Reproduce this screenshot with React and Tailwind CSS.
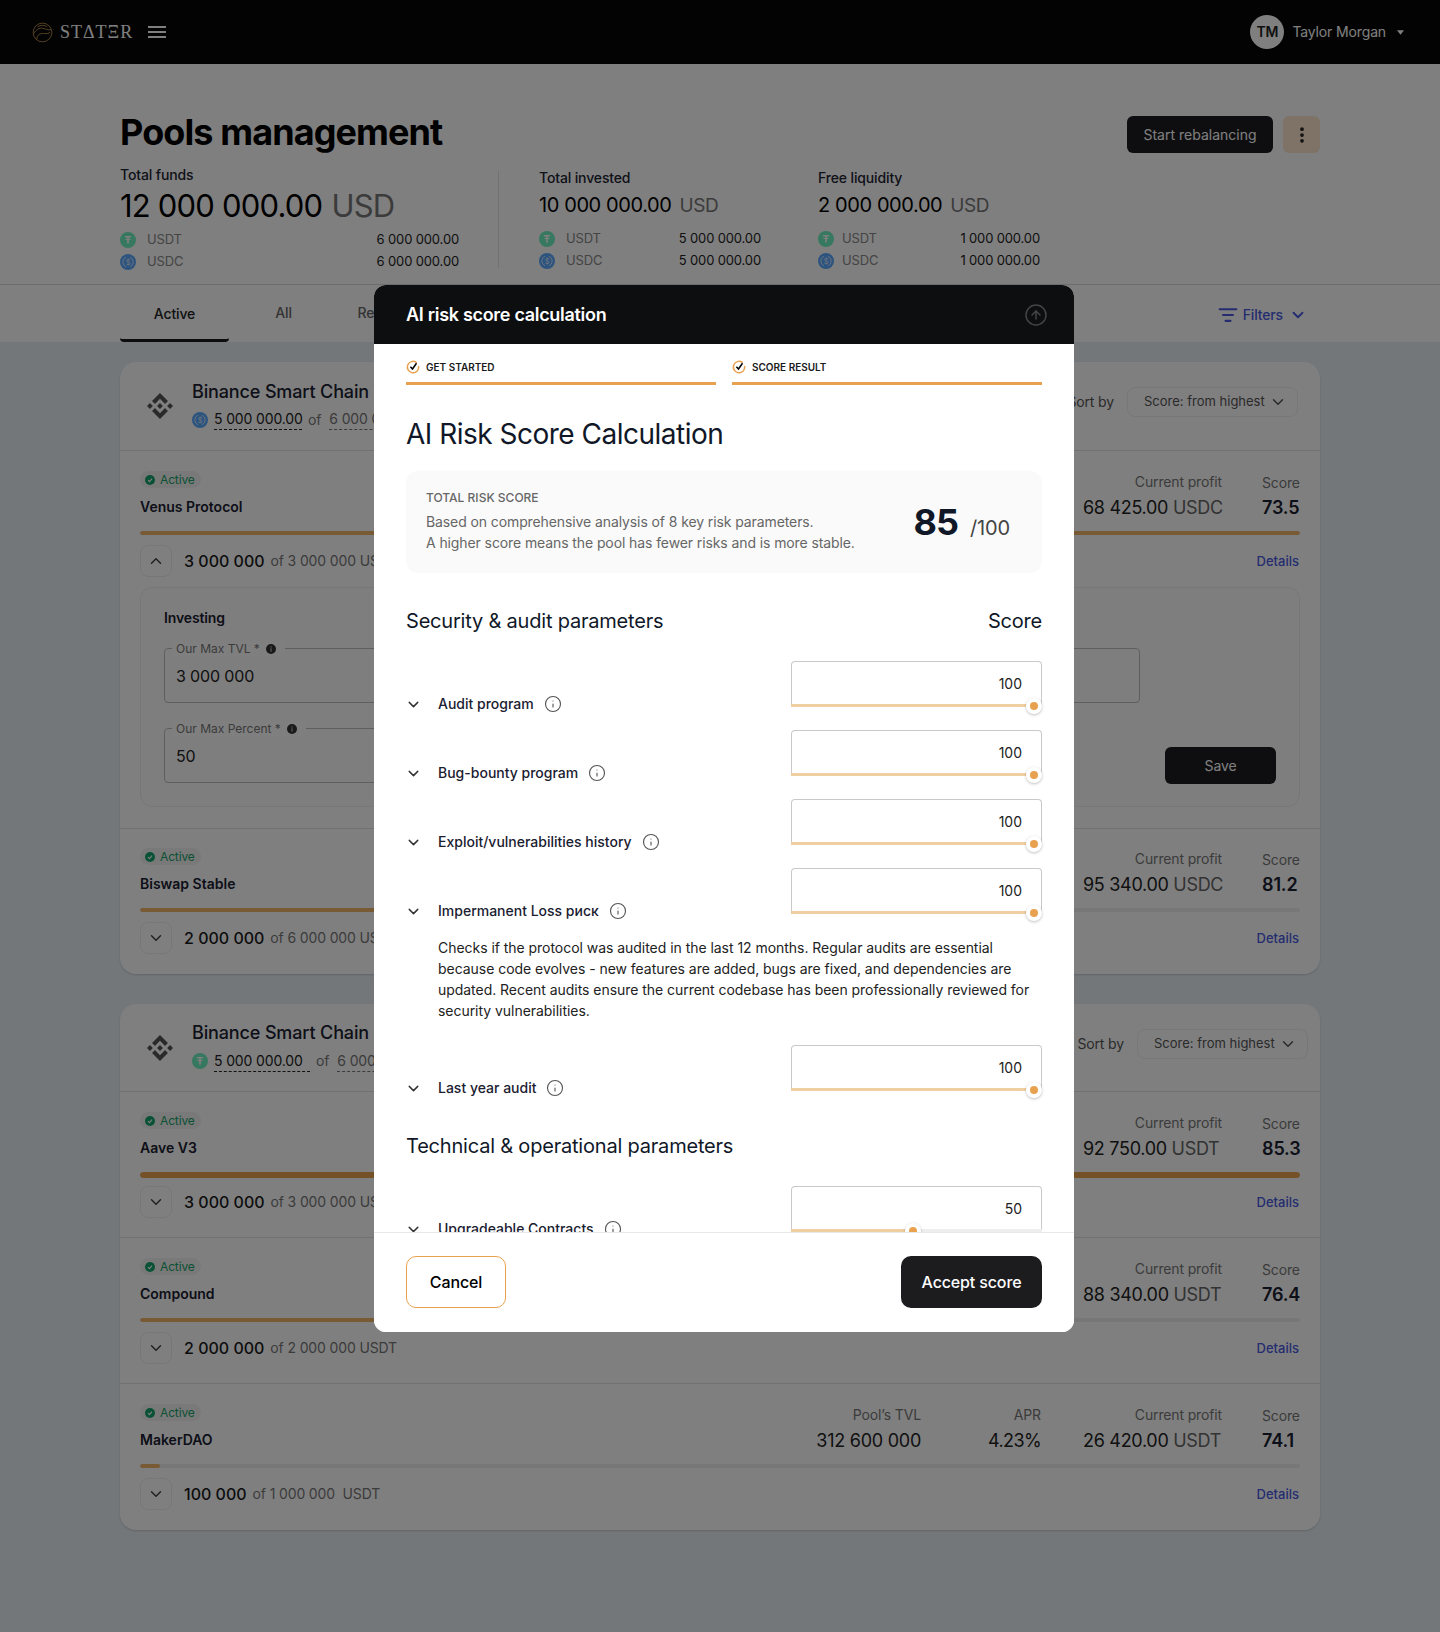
import { ChevronDown, ChevronUp, CircleArrowUp, EllipsisVertical, Info, ListFilter } from 'lucide-react';

const tether = (
  <svg viewBox="0 0 16 16" className="w-4 h-4 shrink-0">
    <circle cx="8" cy="8" r="8" fill="#6ef0c0" />
    <path d="M4.900 4.100h6.200v1.400H8.800v1.400c1.200.1 2.200.4 2.200.7s-1 .6-2.200.7v3.200H7.200V8.300C6 8.200 5 7.900 5 7.600s1-.6 2.200-.7V5.500H4.900z" fill="#fff" />
  </svg>
);

const usdc = (
  <svg viewBox="0 0 16 16" className="w-4 h-4 shrink-0">
    <circle cx="8" cy="8" r="8" fill="#5aa8ff" />
    <path d="M6 3.200a5.200 5.200 0 0 0 0 9.600M10 3.200a5.200 5.200 0 0 1 0 9.600" fill="none" stroke="#dfe9fb" strokeWidth="0.9" />
    <text x="8" y="10.700" textAnchor="middle" fontSize="7.500" fill="#dfe9fb" fontFamily="Inter">$</text>
  </svg>
);

const binance = (
  <svg viewBox="0 0 24 24" className="w-[26px] h-[26px] text-[#555]" fill="currentColor">
    <path d="M16.624 13.9202l2.7175 2.7154-7.353 7.353-7.353-7.352 2.7175-2.7164 4.6355 4.6595 4.6356-4.6595zm4.6366-4.6366L24 12l-2.7154 2.7164L18.5682 12l2.6924-2.7164zm-9.272.001l2.7163 2.6914-2.7164 2.7174v-.001L9.2721 12l2.7164-2.7154zm-9.2722-.001L5.4088 12l-2.6914 2.6924L0 12l2.7164-2.7164zM11.9885.0115l7.353 7.329-2.7174 2.7154-4.6356-4.6356-4.6355 4.6595-2.7174-2.7154 7.353-7.353z" />
  </svg>
);

function StepCheck() {
  return (
    <svg viewBox="0 0 14 14" className="w-3.5 h-3.5 shrink-0 overflow-visible" fill="none">
      <path d="M10.300 2.400A5.700 5.700 0 1 0 12.700 6.500" stroke="#e8a24f" strokeWidth="1.500" strokeLinecap="round" />
      <path d="M4.400 6.700l2.100 2.300 4-5.700" stroke="#000" strokeWidth="1.500" />
    </svg>
  );
}

function ActiveBadge() {
  return (
    <span className="inline-flex items-center gap-[5px] h-[17px] w-[61px] pl-[5px] rounded-full bg-[#f2f2f2] text-xs text-[#16a36a]">
      <svg viewBox="0 0 10 10" className="w-2.5 h-2.5">
        <circle cx="5" cy="5" r="5" fill="#12a56b" />
        <path d="M3 5.100l1.500 1.500L7 3.700" fill="none" stroke="#fff" strokeWidth="1.100" />
      </svg>
      Active
    </span>
  );
}

function Stat({ label, amount, big, usdt, usdc: usdcValue, width, nameGap }) {
  return (
    <div className={width}>
      <div className={`text-sm font-medium text-[#1d2433] ${big ? '' : 'pt-[3px]'}`}>{label}</div>
      <div className={big ? 'text-[31px] leading-[36px] mt-[3px] tracking-[-0.8px] text-black' : 'text-[20px] leading-[28px] mt-[3px] tracking-[-0.4px] text-black'}>
        {amount}
        <span className={`text-[#777] ${big ? 'ml-[9px]' : 'ml-[8px] text-[19px]'}`}>USD</span>
      </div>
      <div className={`text-[13px] text-[#888] ${big ? 'mt-[5px]' : 'mt-[8px]'}`}>
        <div className="flex items-center h-[22px]">
          {tether}
          <span className={nameGap}>USDT</span>
          <span className="ml-auto text-[#222]">{usdt}</span>
        </div>
        <div className="flex items-center h-[22px]">
          {usdc}
          <span className={nameGap}>USDC</span>
          <span className="ml-auto text-[#222]">{usdcValue}</span>
        </div>
      </div>
    </div>
  );
}

function Field({ label, value, className = '' }) {
  return (
    <div className={`relative h-[55px] border border-[#bdbdbd] rounded-[4px] flex items-center pl-[11px] text-base text-[#222] ${className}`}>
      <span className="absolute left-[7px] top-[-8px] flex items-center gap-[6px] bg-white pl-[4px] pr-[9px] text-xs tracking-normal text-[#777]">
        {label}
        <svg viewBox="0 0 10 10" className="w-2.5 h-2.5">
          <circle cx="5" cy="5" r="5" fill="#333" />
          <rect x="4.400" y="4.300" width="1.300" height="3.400" fill="#aaa" />
          <rect x="4.400" y="2.300" width="1.300" height="1.300" fill="#aaa" />
        </svg>
      </span>
      {value}
    </div>
  );
}

function PoolRow({ pool, last }) {
  const Chevron = pool.open ? ChevronUp : ChevronDown;
  return (
    <div className={`px-5 ${pool.tight ? 'pt-[19px]' : 'pt-5'} ${last ? 'pb-5' : 'border-b border-[#dfe5ea]'} ${!last && pool.open ? 'pb-[21px]' : ''} ${!last && !pool.open ? 'pb-[19px]' : ''}`}>
      <div className="flex h-[46px]">
        <div>
          <div className="flex h-[17px]"><ActiveBadge /></div>
          <div className="text-sm font-semibold tracking-normal text-[#1a2030] mt-[9px] leading-5">{pool.name}</div>
        </div>
        <div className="ml-auto flex">
          <div className="w-[120px] text-right pt-[1px]">
            <div className="text-sm leading-5 text-[#777]">Pool’s TVL</div>
            <div className="text-lg leading-7 tracking-[-0.25px] text-[#222] mt-[2px]">{pool.tvl}</div>
          </div>
          <div className="w-[120px] text-right pt-[1px]">
            <div className="text-sm leading-5 text-[#777]">APR</div>
            <div className="text-lg leading-7 tracking-[-0.6px] text-[#222] mt-[2px]">{pool.apr}</div>
          </div>
          <div className="w-[139px] ml-[42px] pt-[1px]">
            <div className="text-sm leading-5 text-[#777] text-right">Current profit</div>
            <div className="text-lg leading-7 tracking-[-0.3px] text-[#222] mt-[2px] whitespace-nowrap">
              {pool.profit} <span className="text-[#666]">{pool.coin}</span>
            </div>
          </div>
          <div className="w-[38px] ml-[40px] pt-[2px]">
            <div className="text-sm leading-5 text-[#777]">Score</div>
            <div className="text-lg leading-7 font-semibold text-[#1a2030] mt-[1px]">{pool.score}</div>
          </div>
        </div>
      </div>
      <div className={`mt-[14px] bg-[#eeeeee] rounded-full overflow-hidden ${pool.thick ? 'h-[6px]' : 'h-[4px]'}`}>
        <div className={`h-full rounded-full ${pool.fill} ${pool.thick ? 'bg-[#e8a24f]' : 'bg-[#f0b468]'}`} />
      </div>
      <div className={`flex items-center h-8 ${pool.thick ? 'mt-[8px]' : 'mt-[10px]'}`}>
        <span className="w-8 h-8 flex items-center justify-center border border-[#eeeeee] rounded-lg text-[#444]">
          <Chevron size={18} />
        </span>
        <span className="ml-3 text-base font-medium tracking-normal text-[#1a1a1a]">{pool.invested}</span>
        <span className="ml-[6px] text-sm text-[#777] whitespace-pre">{pool.of}</span>
        <span className="ml-auto mr-[1px] pt-[1px] text-[13px] font-medium tracking-normal text-[#4a5ae0]">Details</span>
      </div>
      {pool.open && (
        <div className="mt-[10px] h-[220px] border border-[#eeeeee] rounded-xl bg-[#fcfcfc] flex pl-[23px] pr-[23px]">
          <div className="flex-1">
            <div className="mt-[20px] text-sm font-semibold text-[#1a2030] leading-5">Investing</div>
            <div className="mt-[20px] grid grid-cols-2 gap-x-6 gap-y-[25px] mr-[2px]">
              <Field label="Our Max TVL *" value="3 000 000" />
              <Field label="Our Max APR *" value="5" />
              <Field label="Our Max Percent *" value="50" />
            </div>
          </div>
          <button className="self-end mb-[22px] ml-[23px] w-[111px] h-[37px] rounded-md bg-[#1c1d20] text-sm text-white">Save</button>
        </div>
      )}
    </div>
  );
}

function PoolCard({ icon, top, headHeight, selectGap, dashWidth, pools }) {
  return (
    <div className={`bg-white rounded-2xl shadow-[0_1px_2px_rgba(0,0,0,0.15)] ${top}`}>
      <div className={`flex items-center border-b border-[#dfe5ea] pl-[27px] ${headHeight}`}>
        {binance}
        <div className="ml-[19px] mb-[4px]">
          <div className="text-lg font-medium leading-[26px] text-[#1a2030]">Binance Smart Chain</div>
          <div className="flex items-center text-sm mt-[5px] h-5">
            {icon}
            <span className={`ml-[6px] border-b border-dashed border-[#222] text-[#222] whitespace-nowrap ${dashWidth}`}>5 000 000.00</span>
            <span className="ml-[6px] text-[#777]">of</span>
            <span className="ml-[8px] border-b border-dashed border-[#777] text-[#777]">6 000 000.00</span>
          </div>
        </div>
        <div className={`ml-auto flex items-center gap-[13px] mb-2 ${selectGap}`}>
          <span className="text-sm text-[#555]">Sort by</span>
          <span className="w-[171px] h-[30px] flex items-center justify-between pl-4 pr-[10px] border border-[#eeeeee] rounded-lg text-[13px] tracking-normal text-[#555] whitespace-nowrap">
            Score: from highest
            <ChevronDown size={18} />
          </span>
        </div>
      </div>
      {pools.map((pool, i) => (
        <PoolRow key={pool.name} pool={pool} last={i === pools.length - 1} />
      ))}
    </div>
  );
}

function ScoreRow({ label, value = 100 }) {
  const isFull = value === 100;
  return (
    <div className="h-[69px] flex justify-between">
      <div className="mt-[33px] h-5 flex items-center text-sm font-medium tracking-normal text-[#1a2030]">
        <ChevronDown size={17} className="text-[#333] ml-[-1px]" />
        <span className="ml-[16px]">{label}</span>
        <Info size={18} className="ml-[10px] text-[#555]" strokeWidth={1.5} />
      </div>
      <div className="w-[251px]">
        <div className="h-[43px] border border-b-0 border-[#c9c9c9] rounded-t-[4px] flex items-center justify-end pr-[19px] pt-[1px] text-sm tracking-normal text-[#222]">
          {value}
        </div>
        <div className="relative h-[3px] bg-[#eeeeee]">
          <div className={`h-full bg-[#efcfa2] ${isFull ? 'w-full' : 'w-[118px]'}`} />
          <span className={`absolute top-[-6px] w-4 h-4 rounded-full bg-white shadow-[0_1px_3px_rgba(0,0,0,0.25)] flex items-center justify-center ${isFull ? 'right-0' : 'left-[114px]'}`}>
            <span className="w-2 h-2 rounded-full bg-[#e8a24f]" />
          </span>
        </div>
      </div>
    </div>
  );
}

const firstPools = [
  { name: 'Venus Protocol', tvl: '298 400 000', apr: '3.87%', profit: '68 425.00', coin: 'USDC', score: '73.5', invested: '3 000 000', of: 'of 3 000 000 USDC', fill: 'w-full', open: true },
  { name: 'Biswap Stable', tvl: '154 200 000', apr: '5.12%', profit: '95 340.00', coin: 'USDC', score: '81.2', invested: '2 000 000', of: 'of 6 000 000 USDC', fill: 'w-[33%]', tight: true },
];

const secondPools = [
  { name: 'Aave V3', tvl: '512 300 000', apr: '4.51%', profit: '92 750.00', coin: 'USDT', score: '85.3', invested: '3 000 000', of: 'of 3 000 000 USDT', fill: 'w-full', thick: true },
  { name: 'Compound', tvl: '287 900 000', apr: '3.96%', profit: '88 340.00', coin: 'USDT', score: '76.4', invested: '2 000 000', of: 'of 2 000 000 USDT', fill: 'w-[40%]' },
  { name: 'MakerDAO', tvl: '312 600 000', apr: '4.23%', profit: '26 420.00', coin: 'USDT', score: '74.1', invested: '100 000', of: 'of 1 000 000  USDT', fill: 'w-[20px]' },
];

export default function App() {
  return (
    <div className="relative min-h-[1632px] bg-[#e6eef3] tracking-[-0.14px] font-['Inter',sans-serif]">
      {/* Top bar */}
      <header className="h-16 bg-[#060606] flex items-center justify-between pl-[32px] pr-[36px]">
        <div className="flex items-center">
          <svg viewBox="0 0 22 22" className="w-[21px] h-[21px]" fill="none" stroke="#d9a458" strokeWidth="0.8">
            <circle cx="11" cy="11" r="9.800" />
            <path d="M2 12c2-4 6-6 9-5.500 3 .4 6 2.500 9 1.500M5 18c0-4 3-6 6-6s4 1 8-1M6 5c3-2 7-2 10 0" />
          </svg>
          <span className="ml-[7px] text-[18px] font-['Liberation_Serif',serif] tracking-[1px] text-white leading-none">STΔTΞR</span>
          <svg viewBox="0 0 18 12" className="ml-[15px] w-[18px] h-3" stroke="#fff" strokeWidth="2">
            <path d="M0 1h18M0 6h18M0 11h18" />
          </svg>
        </div>
        <div className="flex items-center">
          <span className="w-[34px] h-[34px] rounded-full bg-white flex items-center justify-center text-sm font-semibold text-[#222]">TM</span>
          <span className="ml-2 text-sm text-white">Taylor Morgan</span>
          <svg viewBox="0 0 8 5" className="ml-[11px] w-[7px] h-[5px]"><path d="M0 0h8L4 5z" fill="#fff" /></svg>
        </div>
      </header>

      {/* Summary */}
      <section className="bg-white h-[278px]">
        <div className="h-[221px] border-b border-[#d9d9d9] pl-[120px] pr-[120px] pt-[48px]">
          <div className="flex justify-between h-[53px]">
            <h1 className="text-[36px] leading-10 font-bold tracking-[-0.9px] text-black">Pools management</h1>
            <div className="flex gap-[10px] mt-[4px]">
              <button className="w-[146px] h-[37px] rounded-md bg-[#1c1d20] text-sm tracking-normal text-white">Start rebalancing</button>
              <button className="w-[37px] h-[37px] rounded-md bg-[#fce6cc] flex items-center justify-center text-[#222]">
                <EllipsisVertical size={20} strokeWidth={2.5} />
              </button>
            </div>
          </div>
          <div className="flex">
            <Stat big label="Total funds" amount="12 000 000.00" usdt="6 000 000.00" usdc="6 000 000.00" width="w-[339px]" nameGap="ml-[11px]" />
            <div className="ml-[39px] mt-[6px] w-px h-[97px] bg-[#dfe5ea]" />
            <div className="ml-[40px]">
              <Stat label="Total invested" amount="10 000 000.00" usdt="5 000 000.00" usdc="5 000 000.00" width="w-[222px]" nameGap="ml-[11px]" />
            </div>
            <div className="ml-[57px]">
              <Stat label="Free liquidity" amount="2 000 000.00" usdt="1 000 000.00" usdc="1 000 000.00" width="w-[222px]" nameGap="ml-[8px]" />
            </div>
          </div>
        </div>
        <div className="h-[57px] px-[120px] flex justify-between">
          <div className="flex text-sm font-medium text-[#666]">
            <div className="w-[109px] flex items-center justify-center border-b-[3px] pt-[3px] border-[#1a1a1a] rounded-b-sm text-[#222]">Active</div>
            <div className="w-[109px] flex items-center justify-center pb-[1px]">All</div>
            <div className="w-[109px] flex items-center justify-center pb-[1px]">Requested</div>
          </div>
          <div className="flex items-center text-sm font-medium text-[#4a5ae0] pr-[13px] pt-[2px]">
            <ListFilter size={20} strokeWidth={2.5} />
            <span className="ml-[5px]">Filters</span>
            <ChevronDown size={18} strokeWidth={2.5} className="ml-[6px]" />
          </div>
        </div>
      </section>

      {/* Pool cards */}
      <main className="px-[120px] pt-5">
        <PoolCard icon={usdc} top="" headHeight="h-[89px]" selectGap="mr-[22px]" dashWidth="w-[88px]" pools={firstPools} />
        <PoolCard icon={tether} top="mt-[30px]" headHeight="h-[88px]" selectGap="mr-[12px]" dashWidth="w-[96px]" pools={secondPools} />
      </main>

      {/* Overlay */}
      <div className="absolute inset-0 bg-black/50" />

      {/* Modal */}
      <div className="absolute left-[374px] top-[285px] w-[700px] h-[1047px] bg-white rounded-xl overflow-hidden flex flex-col">
        <div className="h-[59px] shrink-0 bg-[#0d0e10] flex items-center justify-between pl-8 pr-[26px]">
          <span className="text-lg font-semibold tracking-[-0.3px] text-white">AI risk score calculation</span>
          <CircleArrowUp size={24} strokeWidth={1.5} className="text-[#444]" />
        </div>

        <div className="flex-1 overflow-hidden px-8">
          <div className="flex gap-4">
            <div className="flex-1 h-[41px] border-b-[3px] border-[#e8a24f] flex items-center gap-[6px] pt-[8px] text-[10px] font-semibold tracking-normal text-[#1a1a1a]">
              <StepCheck />GET STARTED
            </div>
            <div className="flex-1 h-[41px] border-b-[3px] border-[#e8a24f] flex items-center gap-[6px] pt-[8px] text-[10px] font-semibold tracking-normal text-[#1a1a1a]">
              <StepCheck />SCORE RESULT
            </div>
          </div>
          <h2 className="mt-[31px] text-[28px] leading-9 font-normal tracking-[-0.5px] text-[#101828]">AI Risk Score Calculation</h2>
          <div className="mt-[19px] h-[102px] bg-[#fafafa] rounded-xl flex items-center justify-between pl-5 pr-8">
            <div className="mb-[2px]">
              <div className="text-xs font-medium tracking-normal text-[#666]">TOTAL RISK SCORE</div>
              <div className="mt-[5px] text-sm leading-[21px] tracking-[-0.1px] text-[#666]">
                Based on comprehensive analysis of 8 key risk parameters.
                <br />
                A higher score means the pool has fewer risks and is more stable.
              </div>
            </div>
            <div className="flex items-baseline">
              <span className="text-[36px] leading-10 font-bold tracking-[-1px] text-[#101828]">85</span>
              <span className="ml-[12px] text-xl text-[#444]">/100</span>
            </div>
          </div>

          <div className="mt-[34px] flex justify-between text-xl leading-7 tracking-[-0.2px] text-[#101828]">
            <span>Security &amp; audit parameters</span>
            <span>Score</span>
          </div>
          <div className="mt-[26px]">
            <ScoreRow label="Audit program" />
            <ScoreRow label="Bug-bounty program" />
            <ScoreRow label="Exploit/vulnerabilities history" />
            <ScoreRow label="Impermanent Loss риск" />
            <p className="pl-8 pr-[10px] mb-6 text-sm leading-[21px] tracking-[-0.04px] text-[#222]">
              Checks if the protocol was audited in the last 12 months. Regular audits are essential because code evolves - new features are added, bugs are fixed, and dependencies are updated. Recent audits ensure the current codebase has been professionally reviewed for security vulnerabilities.
            </p>
            <ScoreRow label="Last year audit" />
          </div>
          <div className="mt-[18px] text-xl leading-7 tracking-[-0.2px] text-[#101828]">Technical &amp; operational parameters</div>
          <div className="mt-[26px]">
            <ScoreRow label="Upgradeable Contracts" value={50} />
          </div>
        </div>

        <div className="h-[100px] shrink-0 border-t border-[#e8e8e8] bg-white flex items-center justify-between px-8 pb-[2px]">
          <button className="w-[100px] h-[52px] rounded-[10px] border border-[#e8a24f] text-base font-medium text-black">Cancel</button>
          <button className="w-[141px] h-[52px] rounded-[10px] bg-[#1c1c1f] text-base font-medium text-white">Accept score</button>
        </div>
      </div>
    </div>
  );
}
